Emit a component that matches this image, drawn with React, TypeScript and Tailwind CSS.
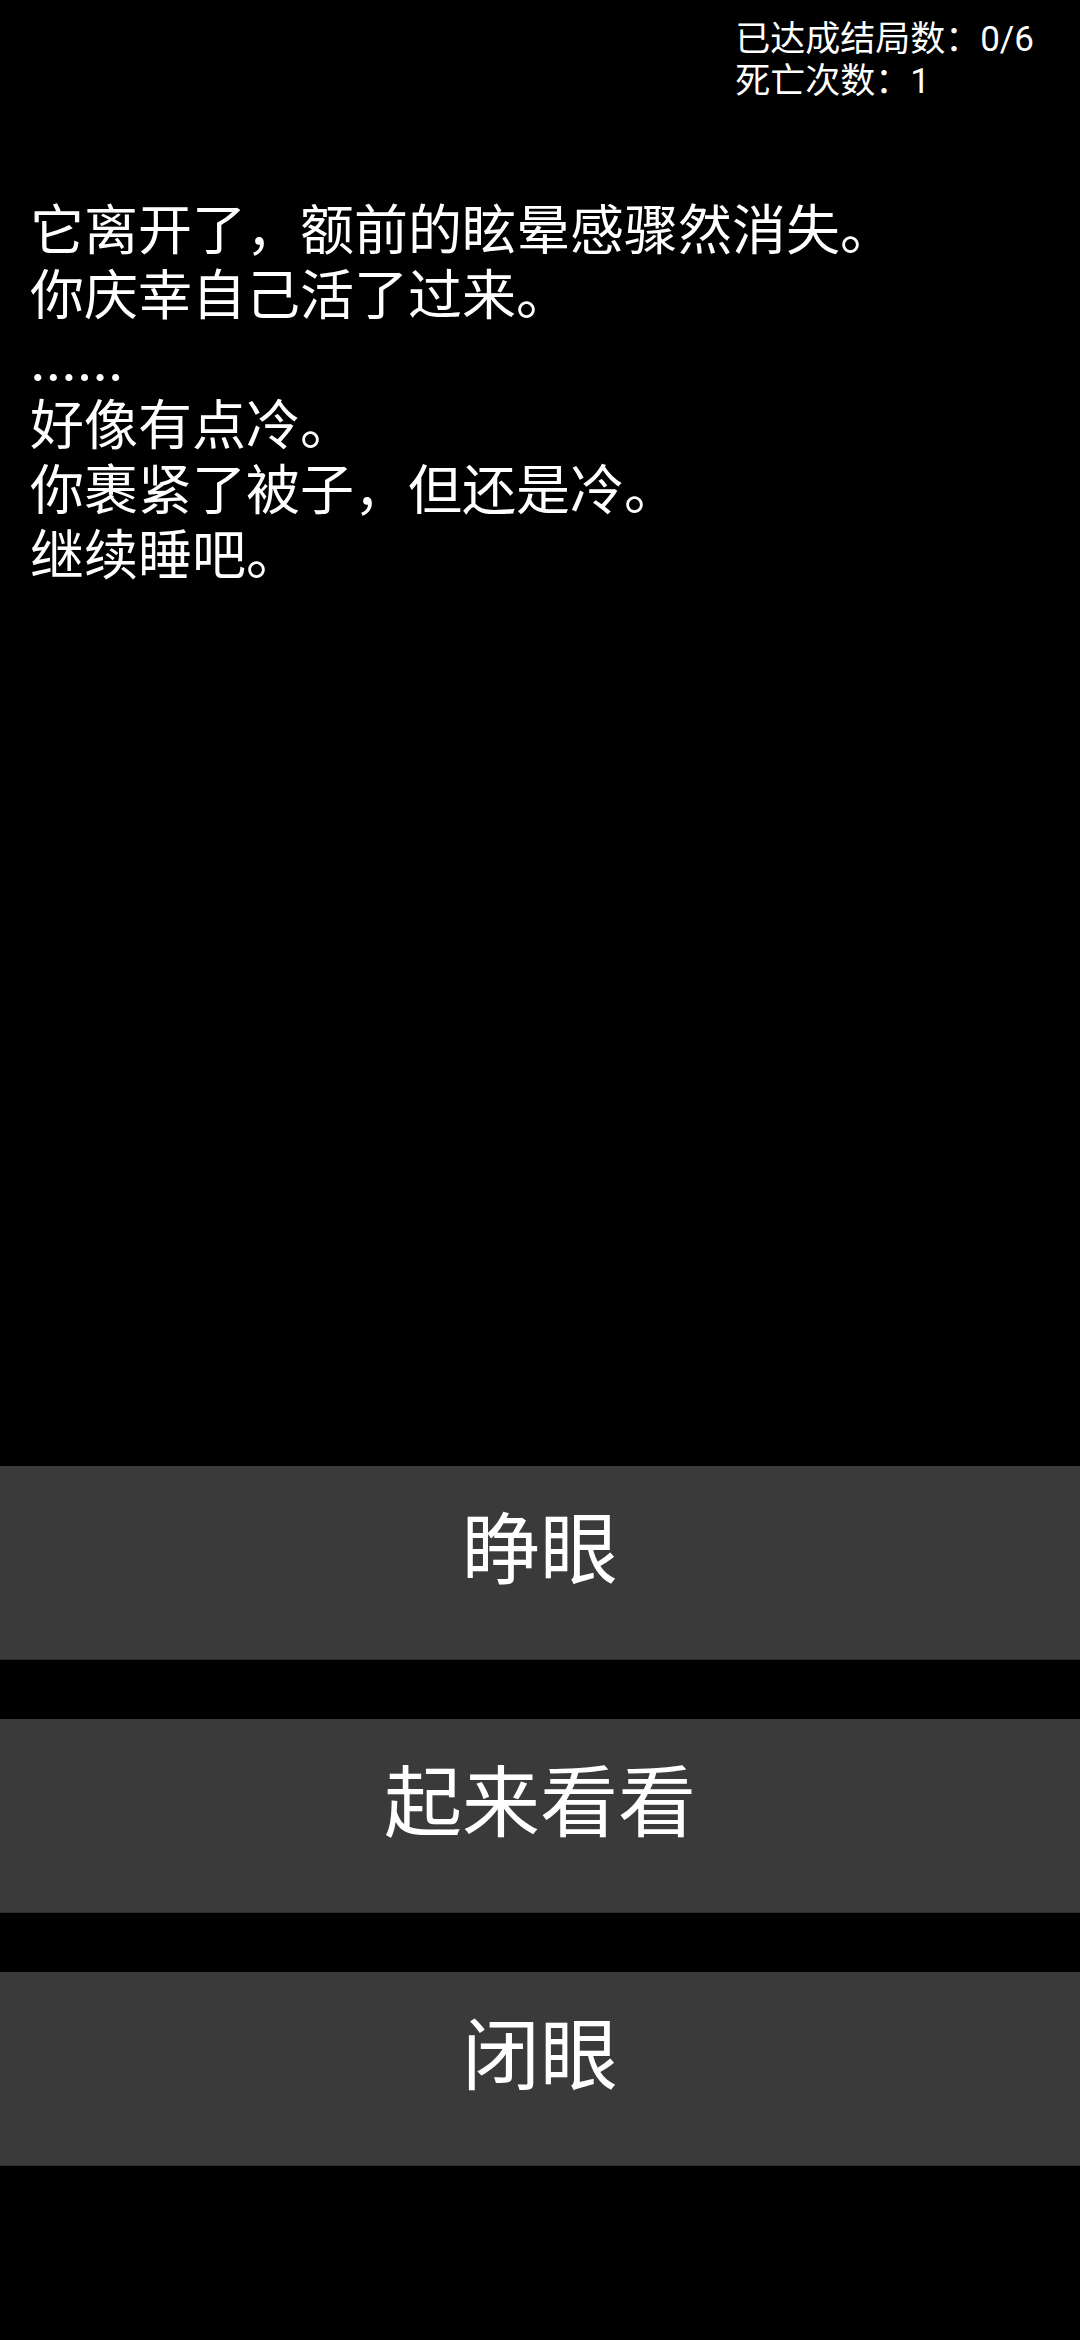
const story = [
  "它离开了，额前的眩晕感骤然消失。",
  "你庆幸自己活了过来。",
  "……",
  "好像有点冷。",
  "你裹紧了被子，但还是冷。",
  "继续睡吧。",
];

const choices = ["睁眼", "起来看看", "闭眼"];

export default function App() {
  return (
    <div
      className="h-[2340px] w-full bg-black text-white flex flex-col overflow-hidden"
      style={{ fontFamily: 'Roboto, "Noto Sans CJK SC", sans-serif' }}
    >
      {/* stats */}
      <div className="self-end pt-[19px] pr-[46px] text-[35px] leading-[42px]">
        <div>已达成结局数：0/6</div>
        <div>死亡次数：1</div>
      </div>

      {/* story text */}
      <div className="pl-[30px] pt-[96px] text-[54px] leading-[65px]">
        {story.map((line, i) =>
          line === "……" ? (
            <div key={i} className="font-['Inter',sans-serif]">
              {line}
            </div>
          ) : (
            <div key={i}>{line}</div>
          )
        )}
      </div>

      {/* choices */}
      <div className="mt-auto pb-[174px] flex flex-col gap-[59px]">
        {choices.map((c) => (
          <button
            key={c}
            className="h-[194px] w-full bg-[#3a3a3a] border-b border-[#2c2c2c] flex items-center justify-center pb-[22px] text-[78px] leading-none text-white"
          >
            {c}
          </button>
        ))}
      </div>
    </div>
  );
}
